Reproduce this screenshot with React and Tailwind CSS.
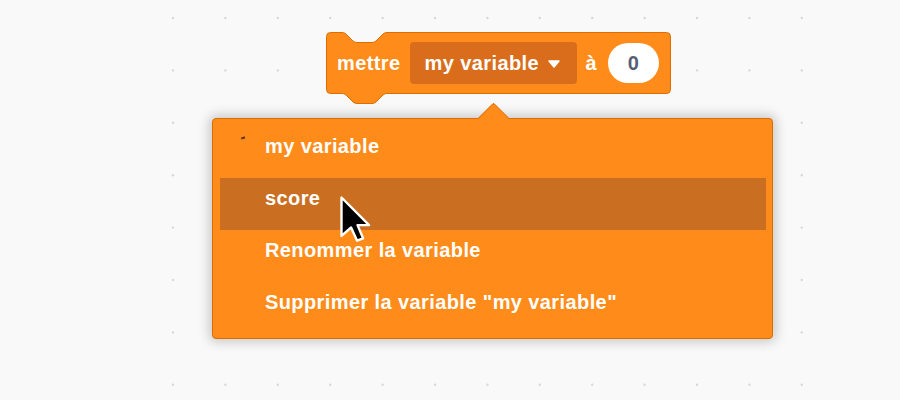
import React from 'react'

const DOT_XS = Array.from({ length: 13 }, (_, i) => 173 + i * 52.4)
const DOT_YS = Array.from({ length: 8 }, (_, i) => 18 + i * 52.4)

const ITEMS = ['my variable', 'score', 'Renommer la variable', 'Supprimer la variable "my variable"']

// block outline with the top notch and bottom tab
const BLOCK_PATH =
  'M 0.5 4.5 A 4 4 0 0 1 4.5 0.5 H 16 c 2.5 0 3.75 1.25 5 2.5 l 5 5 c 1.25 1.25 2.5 2.5 5 2.5 h 15 c 2.5 0 3.75 -1.25 5 -2.5 l 5 -5 c 1.25 -1.25 2.5 -2.5 5 -2.5 H 340.5 A 4 4 0 0 1 344.5 4.5 V 57.5 A 4 4 0 0 1 340.5 61.5 H 61 c -2.5 0 -3.75 1.25 -5 2.5 l -5 5 c -1.25 1.25 -2.5 2.5 -5 2.5 h -15 c -2.5 0 -3.75 -1.25 -5 -2.5 l -5 -5 c -1.25 -1.25 -2.5 -2.5 -5 -2.5 H 4.5 A 4 4 0 0 1 0.5 57.5 Z'

function Grid() {
  return (
    <svg className="absolute left-0 top-0" width="900" height="400">
      {DOT_YS.map(y =>
        DOT_XS.map(x => <circle key={`${x}-${y}`} cx={x} cy={y} r="1.2" fill="#d8d8d8" />)
      )}
    </svg>
  )
}

function SetBlock() {
  return (
    <div className="absolute left-[326px] top-[32px] w-[345px] h-[62px]">
      <svg className="absolute left-0 top-0" width="346" height="74">
        <path d={BLOCK_PATH} fill="#FF8C1A" stroke="#DB6E00" strokeWidth="1" />
      </svg>
      <div className="relative h-full flex items-center pl-[11px] text-white font-bold text-[20px] tracking-[0.4px]">
        <span>mettre</span>
        <div className="ml-[9px] h-[42px] w-[167px] rounded-[4px] bg-[#D96D1C] flex items-center pl-[15px]">
          <span>my variable</span>
          <svg className="ml-[9px] mt-[2px]" width="12" height="8" viewBox="0 0 12 8">
            <path d="M1 1 H11 L6 7 Z" fill="#fff" stroke="#fff" strokeWidth="1.5" strokeLinejoin="round" />
          </svg>
        </div>
        <span className="ml-[9px]">à</span>
        <div className="ml-[11px] w-[51px] h-[40px] rounded-full bg-white flex items-center justify-center text-[#575E75]">
          0
        </div>
      </div>
    </div>
  )
}

function VarMenu() {
  return (
    <div className="absolute left-[212px] top-[118px] w-[561px] h-[221px] rounded-[4px] border border-[#DB6E00] bg-[#FF8C1A] shadow-[0_0_12px_3px_rgba(0,0,0,0.2)]">
      {/* pointer towards the field */}
      <div className="absolute left-[269px] top-[-12.5px] w-[23px] h-[23px] rotate-45 rounded-tl-[3px] border-t border-l border-[#DB6E00] bg-[#FF8C1A]" />
      <div className="relative flex flex-col pt-[7px] pl-[7px] pr-[6px] text-white font-bold text-[20px] tracking-[0.4px]">
        {ITEMS.map((label, i) => (
          <div key={label} className={`relative h-[52px] pt-[8px] pl-[45px] leading-[24px] whitespace-nowrap ${i === 1 ? 'bg-[#CA6F22]' : ''}`}>
            {i === 0 && <span className="absolute left-[21px] top-[11px] w-[4px] h-[1.5px] -rotate-[20deg] bg-[#5b3510]" />}
            {label}
          </div>
        ))}
      </div>
    </div>
  )
}

function Cursor() {
  return (
    <svg className="absolute left-[339px] top-[195px]" width="34" height="50" viewBox="0 0 34 50">
      <path
        d="M2.5 2.5 L2.5 40.9 L12.1 32.5 L18.1 45.7 L24.1 43.3 L18.5 30.1 L30.1 30.1 Z"
        fill="#000"
        stroke="#fff"
        strokeWidth="2.4"
        strokeLinejoin="round"
      />
    </svg>
  )
}

export default function App() {
  return (
    <div className="relative w-[900px] h-[400px] overflow-hidden bg-[#f9f9f9] font-['Liberation_Sans',Arial,sans-serif]">
      <Grid />
      <SetBlock />
      <VarMenu />
      <Cursor />
    </div>
  )
}
